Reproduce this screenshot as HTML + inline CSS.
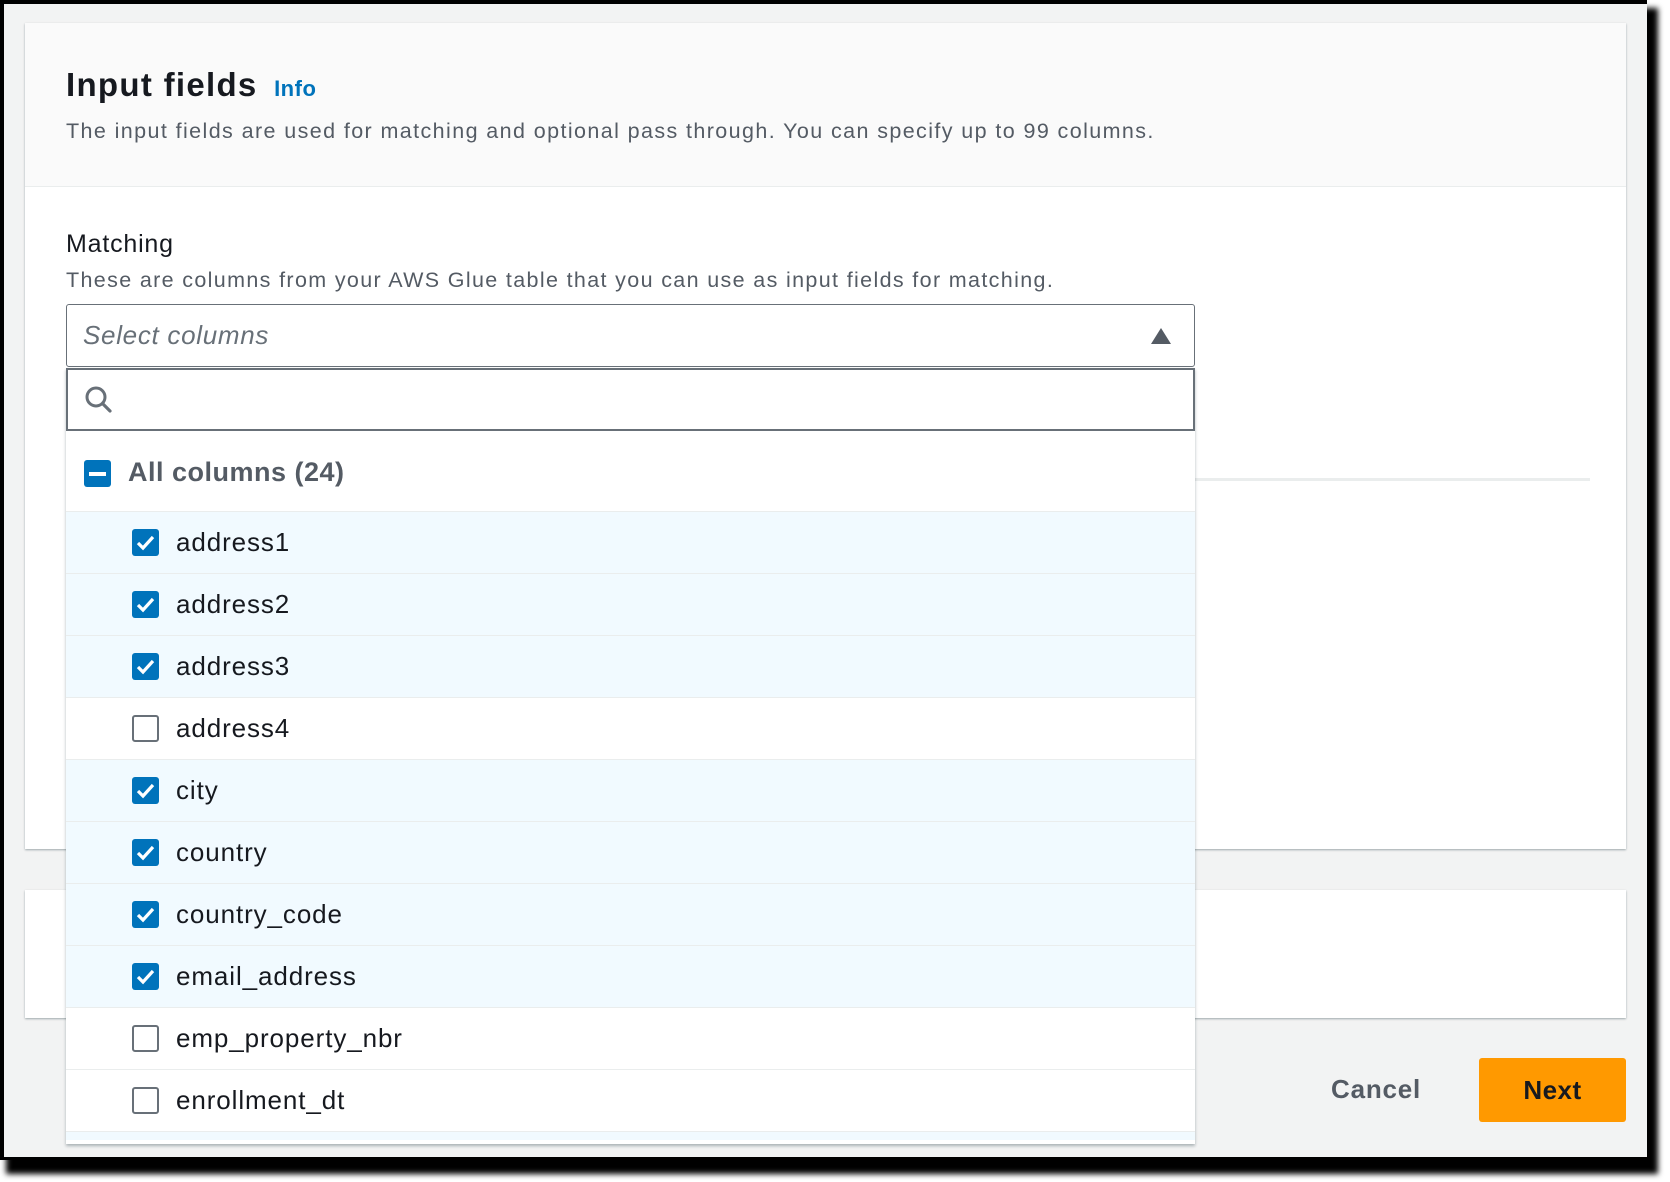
<!DOCTYPE html>
<html><head><meta charset="utf-8"><style>
*{box-sizing:border-box;margin:0;padding:0}
html,body{width:1670px;height:1182px;overflow:hidden;background:#fff;font-family:"Liberation Sans",Arial,sans-serif}
#frame{position:absolute;left:0;top:0;width:1670px;height:1182px;background:#fff}
#shadow{position:absolute;left:6px;top:8px;width:1652px;height:1166px;background:#000;filter:blur(3px)}
#blk{position:absolute;left:0;top:0;width:1647px;height:1160px;background:#000}
#inner{position:absolute;left:4px;top:4px;width:1643px;height:1153px;background:#f2f3f3;overflow:hidden}
.abs{position:absolute}
.panel{position:absolute;left:21px;width:1601px;background:#fff;box-shadow:0 1px 2px rgba(0,28,36,.35)}
.row{position:absolute;left:0;width:1129px;height:62px;border-top:1px solid #eaeded;display:flex;align-items:center}
.row.sel{background:#f1faff}
.cb{position:absolute;left:66px;width:27px;height:27px;border-radius:3px}
.cb.on{background:#0073bb}
.cb.off{border:2px solid #687078;background:#fff}
.lbl{position:absolute;left:110px;font-size:26px;color:#16191f;letter-spacing:0.9px}
</style></head><body>
<div id="frame"><div id="shadow"></div><div id="blk"></div>
<div id="inner">
 <div class="panel" style="top:19px;height:826px">
  <div class="abs" style="left:0;top:0;width:1601px;height:164px;background:#fafafa;border-bottom:1px solid #eaeded"></div>
  <div class="abs" style="left:41px;top:43px;font-size:33px;font-weight:bold;color:#16191f;letter-spacing:1.3px">Input fields <span style="font-size:22px;color:#0073bb;margin-left:6px;letter-spacing:0.5px">Info</span></div>
  <div class="abs" style="left:41px;top:96px;font-size:21.5px;color:#545b64;letter-spacing:1.4px">The input fields are used for matching and optional pass through. You can specify up to 99 columns.</div>
  <div class="abs" style="left:41px;top:207px;font-size:25px;color:#16191f;letter-spacing:0.8px">Matching</div>
  <div class="abs" style="left:41px;top:245px;font-size:21.5px;color:#545b64;letter-spacing:1.35px">These are columns from your AWS Glue table that you can use as input fields for matching.</div>
  <div class="abs" style="left:1170px;top:455px;width:395px;height:3px;background:#eaeded"></div>
 </div>
 <div class="panel" style="top:886px;height:128px"></div>
 <div class="abs" style="left:1327px;top:1070px;font-size:26px;font-weight:bold;color:#545b64;letter-spacing:0.8px">Cancel</div>
 <div class="abs" style="left:1475px;top:1054px;width:147px;height:64px;background:#ff9900;border-radius:3px;font-size:26px;font-weight:bold;color:#16191f;text-align:center;line-height:64px;letter-spacing:0.5px">Next</div>

 <div class="abs" style="left:62px;top:300px;width:1129px;height:63px;border:1px solid #687078;border-radius:3px;background:#fff">
  <div class="abs" style="left:16px;top:15px;font-size:26px;font-style:italic;color:#687078;letter-spacing:0.7px">Select columns</div>
  <svg class="abs" style="left:1083px;top:22px" width="22" height="18"><polygon points="11,1 21,17 1,17" fill="#545b64"/></svg>
 </div>
 <div class="abs" style="left:62px;top:364px;width:1129px;height:776px;background:#fff;box-shadow:0 2px 3px rgba(0,28,36,.3)">
  <div class="abs" style="left:0;top:0;width:1129px;height:63px;border:2px solid #687078;background:#fff">
   <svg class="abs" style="left:16px;top:15px" width="30" height="30" viewBox="0 0 30 30"><circle cx="12" cy="12" r="9" fill="none" stroke="#687078" stroke-width="3"/><line x1="18.5" y1="18.5" x2="26" y2="26" stroke="#687078" stroke-width="3.2" stroke-linecap="round"/></svg>
  </div>
  <div class="abs" style="left:18px;top:92px;width:27px;height:27px;background:#0073bb;border-radius:3px"><div style="position:absolute;left:5px;top:12px;width:17px;height:4px;background:#fff"></div></div>
  <div class="abs" style="left:62px;top:89px;font-size:27px;font-weight:bold;color:#545b64;letter-spacing:0.5px">All columns (24)</div>
 </div>
</div></div>
<div style="position:absolute;left:66px;top:511px">
 <div class="row sel" style="top:0"><div class="cb on"><svg width="27" height="27"><path d="M6 14l5 5 10-11" fill="none" stroke="#fff" stroke-width="3.2"/></svg></div><div class="lbl">address1</div></div>
 <div class="row sel" style="top:62px"><div class="cb on"><svg width="27" height="27"><path d="M6 14l5 5 10-11" fill="none" stroke="#fff" stroke-width="3.2"/></svg></div><div class="lbl">address2</div></div>
 <div class="row sel" style="top:124px"><div class="cb on"><svg width="27" height="27"><path d="M6 14l5 5 10-11" fill="none" stroke="#fff" stroke-width="3.2"/></svg></div><div class="lbl">address3</div></div>
 <div class="row" style="top:186px"><div class="cb off"></div><div class="lbl">address4</div></div>
 <div class="row sel" style="top:248px"><div class="cb on"><svg width="27" height="27"><path d="M6 14l5 5 10-11" fill="none" stroke="#fff" stroke-width="3.2"/></svg></div><div class="lbl">city</div></div>
 <div class="row sel" style="top:310px"><div class="cb on"><svg width="27" height="27"><path d="M6 14l5 5 10-11" fill="none" stroke="#fff" stroke-width="3.2"/></svg></div><div class="lbl">country</div></div>
 <div class="row sel" style="top:372px"><div class="cb on"><svg width="27" height="27"><path d="M6 14l5 5 10-11" fill="none" stroke="#fff" stroke-width="3.2"/></svg></div><div class="lbl">country_code</div></div>
 <div class="row sel" style="top:434px"><div class="cb on"><svg width="27" height="27"><path d="M6 14l5 5 10-11" fill="none" stroke="#fff" stroke-width="3.2"/></svg></div><div class="lbl">email_address</div></div>
 <div class="row" style="top:496px"><div class="cb off"></div><div class="lbl">emp_property_nbr</div></div>
 <div class="row" style="top:558px"><div class="cb off"></div><div class="lbl">enrollment_dt</div></div>
 <div class="row sel" style="top:620px;height:9px"></div>
</div>
</body></html>
